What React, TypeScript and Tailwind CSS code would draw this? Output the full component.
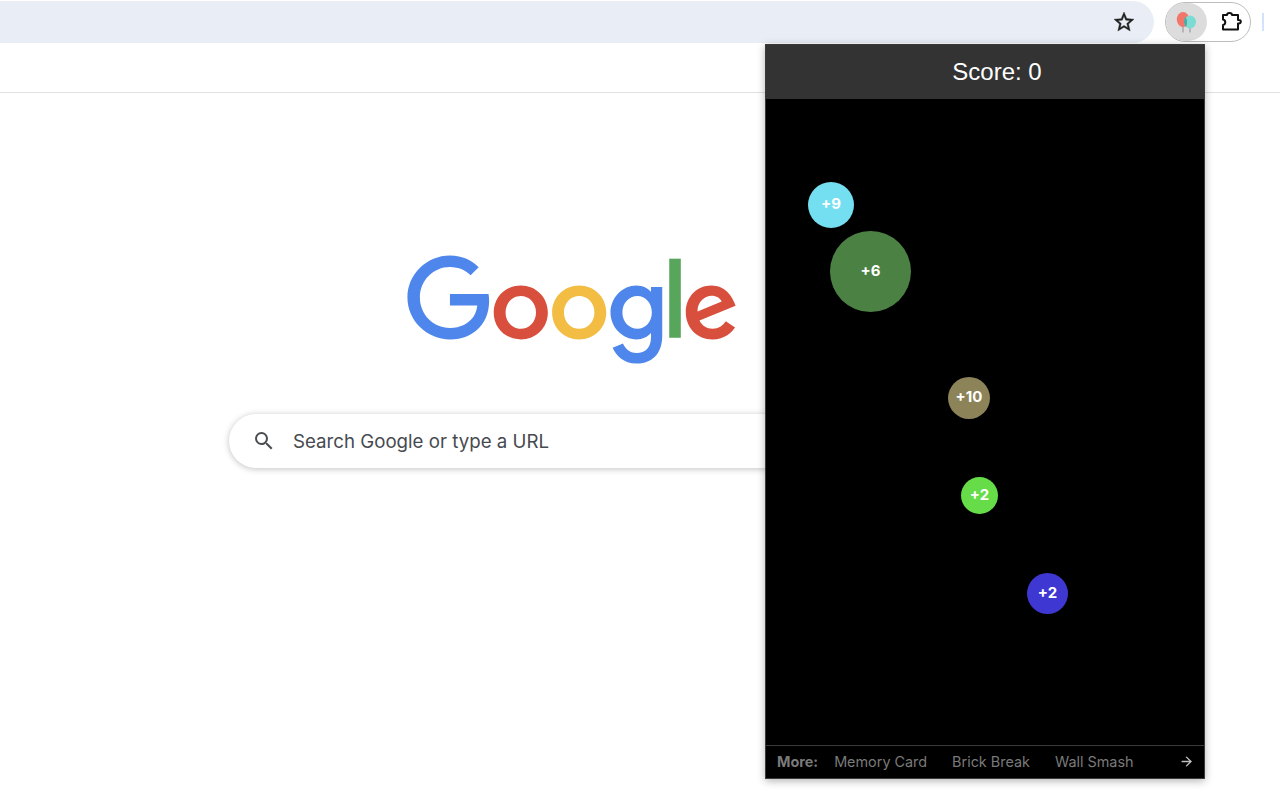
import { ArrowRight } from 'lucide-react';

const BUBBLES = [
  { label: '+9', left: 42, top: 83, size: 46, color: '#74dff0' },
  { label: '+6', left: 64, top: 132, size: 81, color: '#4b8243' },
  { label: '+10', left: 182, top: 278, size: 42, color: '#8d8358' },
  { label: '+2', left: 195, top: 378, size: 37, color: '#66dc48' },
  { label: '+2', left: 261, top: 474, size: 41, color: '#3f37d1' },
];

function GoogleLogo() {
  return (
    <svg width="331" height="112" viewBox="0 0 272 92" aria-label="Google">
      <path fill="#d94f3d" d="M115.75 47.18c0 12.77-9.99 22.18-22.25 22.18s-22.25-9.41-22.25-22.18C71.25 34.32 81.24 25 93.5 25s22.25 9.32 22.25 22.18zm-9.74 0c0-7.98-5.79-13.44-12.51-13.44S80.99 39.2 80.99 47.18c0 7.9 5.79 13.44 12.51 13.44s12.51-5.55 12.51-13.44z" />
      <path fill="#f2bd42" d="M163.75 47.18c0 12.77-9.99 22.18-22.25 22.18s-22.25-9.41-22.25-22.18c0-12.85 9.99-22.18 22.25-22.18s22.25 9.32 22.25 22.18zm-9.74 0c0-7.98-5.79-13.44-12.51-13.44s-12.51 5.46-12.51 13.44c0 7.9 5.79 13.44 12.51 13.44s12.51-5.55 12.51-13.44z" />
      <path fill="#4f86ec" d="M209.75 26.34v39.82c0 16.38-9.66 23.07-21.08 23.07-10.75 0-17.22-7.19-19.66-13.07l8.48-3.53c1.51 3.61 5.21 7.87 11.17 7.87 7.31 0 11.84-4.51 11.84-13v-3.19h-.34c-2.18 2.69-6.38 5.04-11.68 5.04-11.09 0-21.25-9.66-21.25-22.09 0-12.52 10.16-22.26 21.25-22.26 5.29 0 9.49 2.35 11.68 4.96h.34v-3.61h9.25zm-8.56 20.92c0-7.81-5.21-13.52-11.84-13.52-6.72 0-12.35 5.71-12.35 13.52 0 7.73 5.63 13.36 12.35 13.36 6.63 0 11.84-5.63 11.84-13.36z" />
      <path fill="#58a55c" d="M225 3v65h-9.5V3h9.5z" />
      <path fill="#d94f3d" d="M262.02 54.48l7.56 5.04c-2.44 3.61-8.32 9.83-18.48 9.83-12.6 0-22.01-9.74-22.01-22.18 0-13.19 9.49-22.18 20.92-22.18 11.51 0 17.14 9.16 18.98 14.11l1.01 2.52-29.65 12.28c2.27 4.45 5.8 6.72 10.75 6.72 4.96 0 8.4-2.44 10.92-6.14zm-23.27-7.98l19.82-8.23c-1.09-2.77-4.37-4.7-8.23-4.7-4.95 0-11.84 4.37-11.59 12.93z" />
      <path fill="#4f86ec" d="M35.29 41.41V32H67c.31 1.64.47 3.58.47 5.68 0 7.06-1.93 15.79-8.15 22.01-6.05 6.3-13.78 9.66-24.02 9.66C16.32 69.35.36 53.89.36 34.91.36 15.93 16.32.47 35.3.47c10.5 0 17.98 4.12 23.6 9.49l-6.64 6.64c-4.03-3.78-9.49-6.72-16.97-6.72-13.86 0-24.7 11.17-24.7 25.03 0 13.86 10.84 25.03 24.7 25.03 8.99 0 14.11-3.61 17.39-6.89 2.66-2.66 4.41-6.46 5.1-11.65l-22.49.01z" />
    </svg>
  );
}

function BalloonIcon() {
  return (
    <svg width="22" height="22" viewBox="0 0 22 22">
      <path d="M7 15v6.5" stroke="#8f8f8f" strokeWidth="1" />
      <path d="M14 17v4.5" stroke="#8f8f8f" strokeWidth="1" />
      <ellipse cx="7" cy="8.5" rx="6.2" ry="7.5" fill="#f2766a" />
      <ellipse cx="14" cy="11" rx="6" ry="6.5" fill="#7adcd2" />
      <path d="M9.5 6c-2 2.5-2 7 .5 10c1.5-3 1.5-7-.5-10z" fill="#4fa8a0" />
    </svg>
  );
}

function PuzzleIcon() {
  return (
    <svg width="24" height="22" viewBox="0 0 24 22" fill="none" stroke="#111" strokeWidth="2" strokeLinejoin="round">
      <path d="M5 4H9a2.5 2 0 0 1 5 0H20V9h1a1.8 1.8 0 0 1 0 3.6h-1V18.5H5V14c3-.5 3-5 0-5.5Z" />
    </svg>
  );
}

function StarIcon() {
  return (
    <svg width="24" height="24" viewBox="0 0 24 24" fill="#1f1f1f" stroke="#1f1f1f" strokeWidth="0.4">
      <path d="M22 9.24l-7.19-.62L12 2 9.19 8.63 2 9.24l5.46 4.73L5.82 21 12 17.27 18.18 21l-1.63-7.03L22 9.24zM12 15.4l-3.76 2.27 1-4.28-3.32-2.88 4.38-.38L12 6.1l1.71 4.04 4.38.38-3.32 2.88 1 4.28L12 15.4z" />
    </svg>
  );
}

function SearchIcon() {
  return (
    <svg width="24" height="24" viewBox="0 0 24 24" fill="#4a4d51">
      <path d="M15.5 14h-.79l-.28-.27A6.471 6.471 0 0 0 16 9.5 6.5 6.5 0 1 0 9.5 16c1.61 0 3.09-.59 4.23-1.57l.27.28v.79l5 4.99L20.49 19l-4.99-5zm-6 0C7.01 14 5 11.99 5 9.5S7.01 5 9.5 5 14 7.01 14 9.5 11.99 14 9.5 14z" />
    </svg>
  );
}

export default function App() {
  return (
    <div className="relative h-[800px] w-[1280px] overflow-hidden bg-white font-['Inter',sans-serif]">
      {/* browser toolbar */}
      <div className="flex h-[44px] items-center">
        <div className="flex h-[42px] w-[1154px] items-center justify-end rounded-r-[21px] bg-[#e9eef6] pr-[18px]">
          <StarIcon />
        </div>
        <div className="ml-[11px] flex h-[40px] w-[86px] items-center rounded-full border border-[#bdbdbd]">
          <div className="flex h-[38px] w-[41px] items-center justify-center rounded-full bg-[#dcdcdc]">
            <BalloonIcon />
          </div>
          <div className="ml-[7px] flex w-[32px] justify-center">
            <PuzzleIcon />
          </div>
        </div>
        <div className="ml-[11px] h-[18px] w-[2px] bg-[#d3e3fd]" />
      </div>

      {/* bookmarks bar */}
      <div className="h-[49px] border-b border-[#dfe1e5]" />

      {/* new tab page */}
      <div className="flex w-[1142px] flex-col items-center">
        <div className="ml-[2px] mt-[162px]">
          <GoogleLogo />
        </div>
        <div className="mt-[47px] flex h-[54px] w-[684px] items-center rounded-full bg-white pl-[23px] shadow-[0_1px_6px_rgba(32,33,36,0.28)]">
          <SearchIcon />
          <span className="ml-[17px] pt-[2px] text-[18.7px] text-[#474a4f]">Search Google or type a URL</span>
        </div>
      </div>

      {/* extension popup */}
      <div className="absolute left-[765px] top-[44px] flex h-[735px] w-[440px] flex-col border border-[#3a3a3a] bg-black shadow-[0_2px_8px_rgba(0,0,0,0.3)]">
        <div className="flex h-[54px] shrink-0 items-center justify-center bg-[#333333] pl-[24px] font-['Liberation_Sans',sans-serif] text-[24px] text-white">
          Score: 0
        </div>
        <div className="relative flex-1">
          {BUBBLES.map((b, i) => (
            <div
              key={i}
              className="absolute flex items-center justify-center rounded-full pb-[1px] text-[15px] font-bold text-white"
              style={{ left: b.left, top: b.top, width: b.size, height: b.size, backgroundColor: b.color }}
            >
              {b.label}
            </div>
          ))}
        </div>
        <div className="flex h-[33px] shrink-0 items-center border-t border-[#3a3a3a] pb-[1px] pl-[11px] pr-[10px] text-[14.4px] text-[#7a7a7a]">
          <span className="mr-[16px] font-bold">More:</span>
          <span className="mr-[25px]">Memory Card</span>
          <span className="mr-[25px]">Brick Break</span>
          <span>Wall Smash</span>
          <ArrowRight size={15} strokeWidth={2.2} className="ml-auto text-[#c0c0c0]" />
        </div>
      </div>
    </div>
  );
}
